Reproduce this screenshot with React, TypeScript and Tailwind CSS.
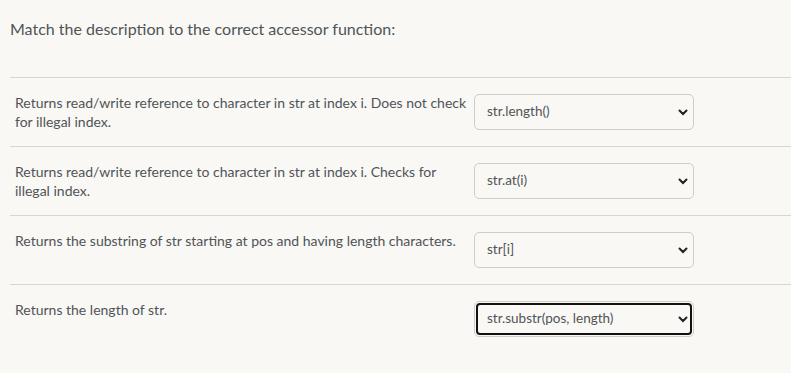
const rows = [
  {
    text: 'Returns read/write reference to character in str at index i. Does not check for illegal index.',
    value: 'str.length()',
  },
  {
    text: 'Returns read/write reference to character in str at index i. Checks for illegal index.',
    value: 'str.at(i)',
  },
  {
    text: 'Returns the substring of str starting at pos and having length characters.',
    value: 'str[i]',
  },
  {
    text: 'Returns the length of str.',
    value: 'str.substr(pos, length)',
    focused: true,
  },
];

function Chevron() {
  return (
    <svg width="10" height="7" viewBox="0 0 10 7" className="shrink-0">
      <path d="M1.5 1.5 L5 5 L8.5 1.5" fill="none" stroke="#202122" strokeWidth="2" strokeLinecap="round" />
    </svg>
  );
}

function FakeSelect({ value, focused }: { value: string; focused?: boolean }) {
  if (focused) {
    return (
      <div className="w-[220px] h-[36px] rounded-[5px] border border-[#cdcdcb] bg-[#f9f8f5] p-[1px] shrink-0">
        <div className="h-full flex items-center justify-between pl-[9px] pr-[2px] rounded-[4px] border-2 border-[#111]">
          <span className="text-[13.5px] text-[#505457] leading-none">{value}</span>
          <Chevron />
        </div>
      </div>
    );
  }
  return (
    <div className="w-[220px] h-[36px] rounded-[5px] border border-[#cdcdcb] bg-[#f9f8f5] shrink-0 flex items-center justify-between pl-[12px] pr-[5px]">
      <span className="text-[13.5px] text-[#505457] leading-none">{value}</span>
      <Chevron />
    </div>
  );
}

export default function App() {
  return (
    <div
      className="w-[791px] h-[373px] bg-[#f9f8f5] text-[#505457] overflow-hidden"
      style={{ fontFamily: 'Lato, "Noto Sans", sans-serif' }}
    >
      <div className="pl-[10px] pt-[17px]">
        <h1 className="text-[16px] leading-[24px] font-normal">Match the description to the correct accessor function:</h1>
        <div className="mt-[36px]">
          {rows.map((r) => (
            <div key={r.value} className="flex items-start h-[69px] border-t border-[#d6d6d4] pt-[15px] pl-[5px]">
              <div className="w-[455px] text-[14px] leading-[19px] pr-[2px]">{r.text}</div>
              <div className="ml-[4px] mt-[1px]">
                <FakeSelect value={r.value} focused={r.focused} />
              </div>
            </div>
          ))}
        </div>
      </div>
    </div>
  );
}
